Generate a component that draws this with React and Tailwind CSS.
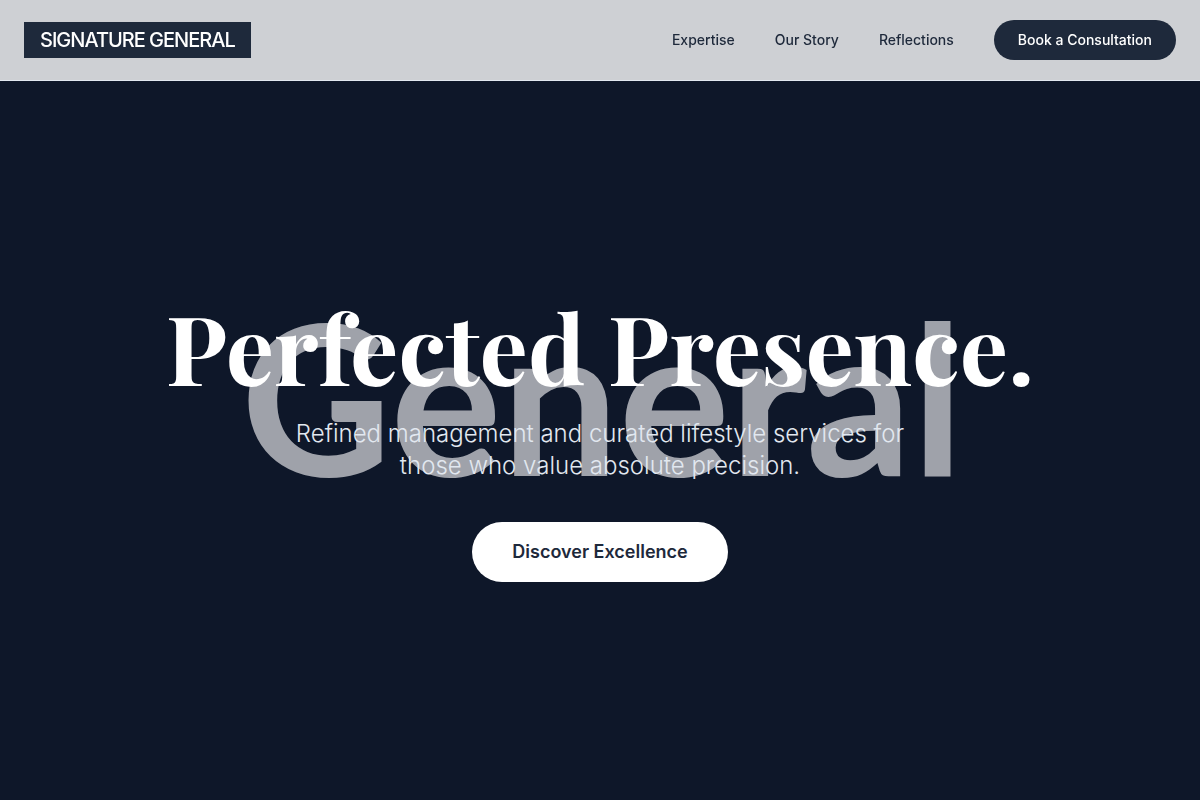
const links = [
  { label: 'Expertise', href: '#expertise' },
  { label: 'Our Story', href: '#story' },
  { label: 'Reflections', href: '#reflections' },
];

const Header = () => (
  <header className="fixed inset-x-0 top-0 z-10 flex items-center justify-between border-b border-[#e2e8f0] bg-white/80 px-6 py-5">
    <a href="#top" className="bg-[#1e293b] px-4 py-1 text-xl font-medium tracking-tighter text-white">
      SIGNATURE GENERAL
    </a>
    <nav className="flex items-center gap-10 text-sm font-medium text-[#1e293b]">
      {links.map((link) => (
        <a key={link.href} href={link.href}>
          {link.label}
        </a>
      ))}
      <button type="button" className="rounded-full bg-[#1e293b] px-6 py-[10px] text-white">
        Book a Consultation
      </button>
    </nav>
  </header>
);

const Hero = () => (
  <main className="relative flex min-h-screen flex-col items-center justify-center px-6 pt-20 text-center">
    {/* oversized word behind the headline */}
    <div
      aria-hidden="true"
      className="absolute inset-0 flex items-center justify-center pb-2 pl-1 font-['Lato',sans-serif] text-[208px] leading-none font-bold text-[#9fa2aa] select-none"
    >
      General
    </div>
    <div className="relative flex flex-col items-center">
      <h1 className="mb-6 font-['Playfair_Display','Liberation_Serif',serif] text-8xl leading-none font-bold text-white">
        Perfected Presence.
      </h1>
      <p className="mb-10 max-w-2xl text-2xl font-light text-[#e2e8f0]">
        Refined management and curated lifestyle services for those who value absolute precision.
      </p>
      <button type="button" className="rounded-full bg-white px-10 py-4 text-lg font-semibold text-[#1e293b]">
        Discover Excellence
      </button>
    </div>
  </main>
);

export default function App() {
  return (
    <div id="top" className="min-h-screen bg-[#0e1729] font-['Inter',sans-serif]">
      <Header />
      <Hero />
    </div>
  );
}
